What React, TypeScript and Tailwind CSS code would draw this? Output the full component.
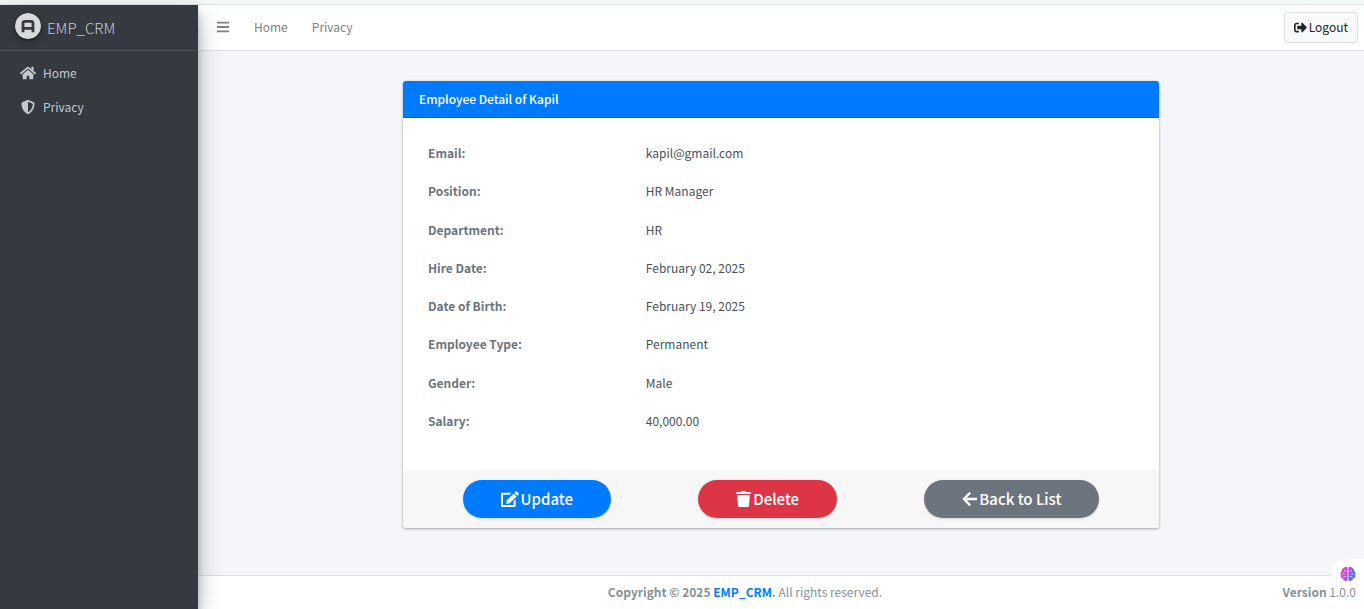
import { FaBars, FaHome, FaShieldAlt, FaSignOutAlt } from 'react-icons/fa';

const details: [string, string][] = [
  ['Email:', 'kapil@gmail.com'],
  ['Position:', 'HR Manager'],
  ['Department:', 'HR'],
  ['Hire Date:', 'February 02, 2025'],
  ['Date of Birth:', 'February 19, 2025'],
  ['Employee Type:', 'Permanent'],
  ['Gender:', 'Male'],
  ['Salary:', '40,000.00'],
];

function BrandLogo() {
  return (
    <svg viewBox="0 0 26 26" className="mb-1 size-[26px] rounded-full shadow-[0_3px_6px_rgba(0,0,0,0.35)]" aria-hidden="true">
      <circle cx="13" cy="13" r="13" fill="#d9dadb" />
      <path d="M8 19.3V10.3Q8 8.3 10 8.3H16Q18 8.3 18 10.3V19.3M8 15.4H18" fill="none" stroke="#343a40" strokeWidth="2.8" />
    </svg>
  );
}

function EditIcon() {
  return (
    <svg viewBox="0 0 18 16" className="h-4 w-[18px]" fill="currentColor" aria-hidden="true">
      <path d="M0 1.8H10.6L8.6 3.8H2V14H12.6V10.2L14.6 8.2V16H0Z" />
      <path d="M12.6 2.6L15.6 5.6L8.9 12.2L5.2 12.9L5.9 9.3Z" />
      <path d="M13.4 1.8L14.7 0.5Q15.3 -0.1 15.9 0.5L17.6 2.2Q18.2 2.8 17.6 3.5L16.4 4.8Z" />
    </svg>
  );
}

function TrashIcon() {
  return (
    <svg viewBox="0 0 15 16" className="h-4 w-[15px]" fill="currentColor" aria-hidden="true">
      <path d="M0.3 1.1H4.4L5.1 0H9.9L10.6 1.1H14.7V3H0.3Z" />
      <path d="M1.2 4H13.8L13 14.7Q12.9 16 11.6 16H3.4Q2.1 16 2 14.7Z" />
    </svg>
  );
}

function BackIcon() {
  return (
    <svg viewBox="0 0 15 16" className="h-4 w-[15px]" fill="none" stroke="currentColor" strokeWidth="2.4" strokeLinejoin="round" aria-hidden="true">
      <path d="M8.2 1.6L1.8 8L8.2 14.4M2 8H15" />
    </svg>
  );
}

function BrainIcon() {
  return (
    <svg viewBox="0 0 16 16" className="size-4" aria-hidden="true">
      <defs>
        <linearGradient id="lobes" x1="0" y1="0.2" x2="1" y2="0.7">
          <stop offset="0" stopColor="#f0509a" />
          <stop offset="0.45" stopColor="#b94be6" />
          <stop offset="1" stopColor="#2f7cf6" />
        </linearGradient>
      </defs>
      <path
        d="M7.6 1.6C6.6 0.3 4.6 0.6 4 2C2.4 2.1 1.5 3.6 1.9 5C0.4 5.9 0 7.8 0.8 9.2C0.5 10.9 1.4 12.2 2.9 12.5C3.4 14.8 6.2 15.7 7.6 14.2ZM8.4 1.6C9.4 0.3 11.4 0.6 12 2C13.6 2.1 14.5 3.6 14.1 5C15.6 5.9 16 7.8 15.2 9.2C15.5 10.9 14.6 12.2 13.1 12.5C12.6 14.8 9.8 15.7 8.4 14.2Z"
        fill="url(#lobes)"
      />
      <path
        d="M4.2 4Q4.4 5.6 6 5.6M2 8.2Q3.6 6.8 4.8 8.4M3.4 11.4Q3.8 9.8 5.8 10.4M11.8 4Q11.6 5.6 10 5.6M14 8.2Q12.4 6.8 11.2 8.4M12.6 11.4Q12.2 9.8 10.2 10.4"
        fill="none"
        stroke="#ffffff"
        strokeOpacity="0.75"
        strokeWidth="0.8"
        strokeLinecap="round"
      />
    </svg>
  );
}

function Sidebar() {
  return (
    <aside className="z-10 w-[198px] shrink-0 bg-[#343a40] text-[#c2c7d0] shadow-[0_10px_24px_rgba(0,0,0,0.25),0_8px_8px_rgba(0,0,0,0.22)]">
      <a href="#" className="flex h-[46px] items-center gap-1.5 border-b border-[#4b545c] pl-[15px] text-[15px] text-[#c8cacc]">
        <BrandLogo />
        <span className="font-light">EMP_CRM</span>
      </a>
      <nav className="flex flex-col gap-0.5 px-1.5 pt-1.5">
        <a href="#" className="flex h-8 items-center gap-[7px] px-3.5">
          <FaHome className="size-4" />
          Home
        </a>
        <a href="#" className="flex h-8 items-center gap-[7px] px-3.5">
          <FaShieldAlt className="h-3.5 w-4" />
          Privacy
        </a>
      </nav>
    </aside>
  );
}

export default function App() {
  return (
    <div className="flex min-h-screen flex-col bg-[#f4f6f9] font-['Noto_Sans_CJK_SC',sans-serif] text-[12px] leading-[18px] text-[#212529]">
      <div className="h-[5px] border-b border-[#dbe2e2] bg-[#f3f9f7]" />
      <div className="flex flex-1">
        <Sidebar />
        <div className="flex min-w-0 flex-1 flex-col">
          <header className="flex h-[46px] items-center border-b border-[#dee2e6] bg-white pr-1.5 pb-px pl-[18px] text-[#808080]">
            <button type="button" aria-label="Toggle menu" className="mr-6">
              <FaBars className="size-3.5" />
            </button>
            <nav className="flex gap-6">
              <a href="#">Home</a>
              <a href="#">Privacy</a>
            </nav>
            <button
              type="button"
              className="ml-auto flex h-[31px] items-center gap-0.5 rounded-[3px] border border-[#dddddd] bg-[#f8f9fa] px-[9px] text-[#212529]"
            >
              <FaSignOutAlt className="size-[13px]" />
              Logout
            </button>
          </header>

          <main className="flex-1 px-4 pt-[30px] pb-10">
            <section className="mx-auto w-2/3 overflow-hidden rounded-[3px] bg-white shadow-[0_0_1px_rgba(0,0,0,0.25),0_1px_3px_rgba(0,0,0,0.3)]">
              <h1 className="flex h-[37px] items-center border-b border-[#0069d9] bg-[#007bff] px-4 text-[12px] font-medium text-white">
                Employee Detail of Kapil
              </h1>
              <div className="px-[15px] pt-4 pb-[30px]">
                <table className="h-[306px] w-full text-left">
                  <tbody>
                    {details.map(([label, value]) => (
                      <tr key={label}>
                        <th scope="row" className="w-[30%] px-2.5 font-bold text-[#6c757d]">
                          {label}
                        </th>
                        <td className="px-2.5 text-[#495057]">{value}</td>
                      </tr>
                    ))}
                  </tbody>
                </table>
              </div>
              <div className="flex h-[58px] items-center justify-around bg-[#f7f7f7] px-4 text-[15px] font-medium text-white">
                <button type="button" className="flex h-[38px] items-center gap-0.5 rounded-full bg-[#007bff] px-[38px] shadow-sm">
                  <EditIcon />
                  Update
                </button>
                <button type="button" className="flex h-[38px] items-center gap-0.5 rounded-full bg-[#dc3545] px-[38px] shadow-sm">
                  <TrashIcon />
                  Delete
                </button>
                <button type="button" className="flex h-[38px] items-center gap-0.5 rounded-full bg-[#6c757d] px-[38px] shadow-sm">
                  <BackIcon />
                  Back to List
                </button>
              </div>
            </section>
          </main>

          <footer className="grid h-[34px] grid-cols-[1fr_auto_1fr] items-center border-t border-[#dee2e6] bg-white pr-2 pb-px pl-0 text-[#869099]">
            <p className="col-start-2 mr-16">
              <strong>
                Copyright © 2025{' '}
                <a href="#" className="text-[#007bff]">
                  EMP_CRM
                </a>
                .
              </strong>{' '}
              All rights reserved.
            </p>
            <p className="text-right">
              <strong>Version</strong> 1.0.0
            </p>
          </footer>
        </div>
      </div>

      <button
        type="button"
        aria-label="Assistant"
        className="fixed right-0 bottom-[21px] z-20 flex h-[29px] w-[33px] items-center rounded-l-full bg-white pl-[9px]"
      >
        <BrainIcon />
      </button>
    </div>
  );
}
